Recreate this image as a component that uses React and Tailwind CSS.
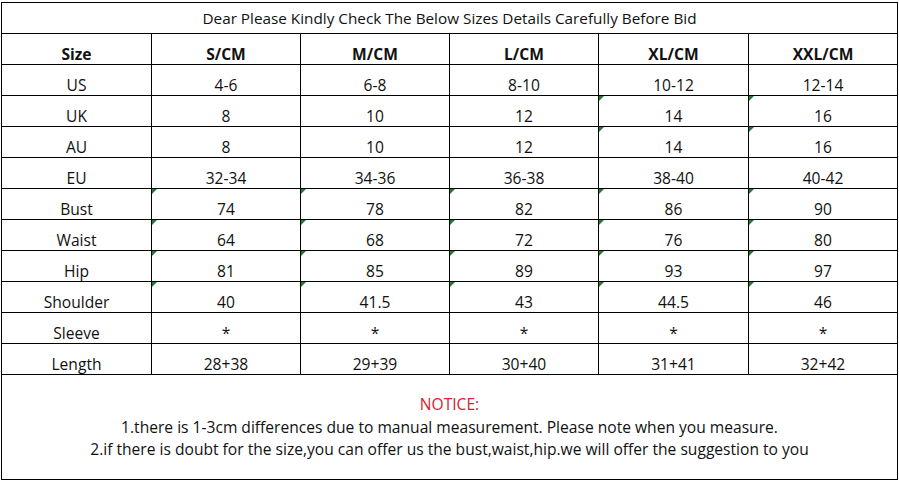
import React from "react";

const headers = ["Size", "S/CM", "M/CM", "L/CM", "XL/CM", "XXL/CM"];
const rows = [
  { label: "US", vals: ["4-6", "6-8", "8-10", "10-12", "12-14"], marks: [] },
  { label: "UK", vals: ["8", "10", "12", "14", "16"], marks: [3, 4] },
  { label: "AU", vals: ["8", "10", "12", "14", "16"], marks: [3, 4] },
  { label: "EU", vals: ["32-34", "34-36", "36-38", "38-40", "40-42"], marks: [] },
  { label: "Bust", vals: ["74", "78", "82", "86", "90"], marks: [0, 1, 2, 3, 4] },
  { label: "Waist", vals: ["64", "68", "72", "76", "80"], marks: [0, 1, 2, 3, 4] },
  { label: "Hip", vals: ["81", "85", "89", "93", "97"], marks: [0, 1, 2, 3, 4] },
  { label: "Shoulder", vals: ["40", "41.5", "43", "44.5", "46"], marks: [0, 1, 2, 3, 4] },
  { label: "Sleeve", vals: ["*", "*", "*", "*", "*"], marks: [] },
  { label: "Length", vals: ["28+38", "29+39", "30+40", "31+41", "32+42"], marks: [] },
];

const grid = "grid grid-cols-[149px_149px_149px_149px_150px_149px] h-[31px] border-t border-black";

function Cell({ children, first, mark, bold }) {
  return (
    <div
      className={
        "relative flex items-end justify-center leading-[20px] " +
        (first ? "" : "border-l border-black ") +
        (bold ? "font-bold" : "")
      }
    >
      {mark && (
        <span className="absolute top-0 left-0 w-0 h-0 border-t-[5px] border-r-[5px] border-t-[#1f7a35] border-r-transparent" />
      )}
      <span>{children}</span>
    </div>
  );
}

export default function App() {
  return (
    <div
      className="w-[899px] h-[481px] bg-white pt-[2px] pl-[1px] text-[#111]"
      style={{ fontFamily: '"Open Sans", "Noto Sans", sans-serif' }}
    >
      <div className="w-[897px] border border-black text-[15.6px]">
        <div className="h-[30px] flex items-center justify-center text-[15.3px] leading-[20px] pb-[1px]">
          Dear Please Kindly Check The Below Sizes Details Carefully Before Bid
        </div>
        <div className={grid}>
          {headers.map((h, i) => (
            <Cell key={h} first={i === 0} bold>
              {h}
            </Cell>
          ))}
        </div>
        {rows.map((r) => (
          <div key={r.label} className={grid}>
            <Cell first>{r.label}</Cell>
            {r.vals.map((v, i) => (
              <Cell key={i} mark={r.marks.includes(i)}>
                {v}
              </Cell>
            ))}
          </div>
        ))}
        <div className="h-[105px] border-t border-black pt-[18px] flex flex-col items-center leading-[22.5px]">
          <div className="text-[#d7212e]">NOTICE:</div>
          <div>1.there is 1-3cm differences due to manual measurement. Please note when you measure.</div>
          <div>2.if there is doubt for the size,you can offer us the bust,waist,hip.we will offer the suggestion to you</div>
        </div>
      </div>
    </div>
  );
}
